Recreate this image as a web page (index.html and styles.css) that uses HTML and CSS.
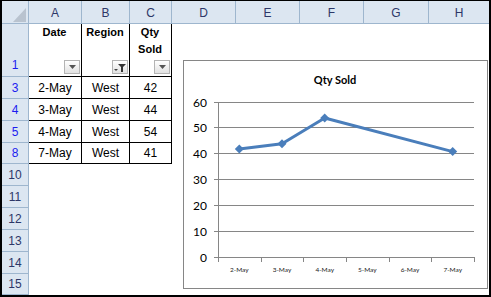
FILE: index.html
```html
<!DOCTYPE html>
<html>
<head>
    <meta charset="UTF-8">
    <title>Qty Sold</title>
    <link rel="stylesheet" href="styles.css">
</head>
<body>
    <div class="sheet">
        <!-- column headers -->
        <div class="corner">
            <svg width="13" height="14" viewBox="0 0 13 14"><polygon points="13,0 13,14 0,14" fill="#b9c3cf"/></svg>
        </div>
        <div class="col-head">A</div>
        <div class="col-head">B</div>
        <div class="col-head">C</div>
        <div class="col-head">D</div>
        <div class="col-head">E</div>
        <div class="col-head">F</div>
        <div class="col-head">G</div>
        <div class="col-head last">H</div>

        <!-- row 1: table headings -->
        <div class="row-head shown tall">1</div>
        <div class="tbl th">
            <span>Date</span>
            <span class="filter-btn">
                <svg width="7" height="4" viewBox="0 0 7 4"><polygon points="0,0 7,0 3.5,4" fill="#555"/></svg>
            </span>
        </div>
        <div class="tbl th">
            <span>Region</span>
            <span class="filter-btn on">
                <svg width="12" height="9" viewBox="0 0 12 9">
                    <polygon points="0,6 4,6 2,8" fill="#444"/>
                    <polygon points="4,1 12,1 9,4 9,9 7,9 7,4" fill="#333"/>
                </svg>
            </span>
        </div>
        <div class="tbl th">
            <span>Qty<br>Sold</span>
            <span class="filter-btn">
                <svg width="7" height="4" viewBox="0 0 7 4"><polygon points="0,0 7,0 3.5,4" fill="#555"/></svg>
            </span>
        </div>
        <div class="blank span5"></div>

        <div class="row-head shown">3</div>
        <div class="tbl">2-May</div>
        <div class="tbl">West</div>
        <div class="tbl">42</div>
        <div class="blank span5"></div>

        <div class="row-head shown">4</div>
        <div class="tbl">3-May</div>
        <div class="tbl">West</div>
        <div class="tbl">44</div>
        <div class="blank span5"></div>

        <div class="row-head shown">5</div>
        <div class="tbl">4-May</div>
        <div class="tbl">West</div>
        <div class="tbl">54</div>
        <div class="blank span5"></div>

        <div class="row-head shown">8</div>
        <div class="tbl">7-May</div>
        <div class="tbl">West</div>
        <div class="tbl">41</div>
        <div class="blank span5"></div>

        <div class="row-head">10</div>
        <div class="blank span8"></div>
        <div class="row-head">11</div>
        <div class="blank span8"></div>
        <div class="row-head">12</div>
        <div class="blank span8"></div>
        <div class="row-head">13</div>
        <div class="blank span8"></div>
        <div class="row-head">14</div>
        <div class="blank span8"></div>
        <div class="row-head">15</div>
        <div class="blank span8"></div>

        <!-- floating chart -->
        <div class="chart">
            <svg width="303" height="227" viewBox="0 0 303 227">
                <text class="chart-title" x="151" y="23" text-anchor="middle">Qty Sold</text>

                <g stroke="#868686" stroke-width="1">
                    <line x1="30" y1="41.5" x2="290" y2="41.5"/>
                    <line x1="30" y1="66.5" x2="290" y2="66.5"/>
                    <line x1="30" y1="92.5" x2="290" y2="92.5"/>
                    <line x1="30" y1="118.5" x2="290" y2="118.5"/>
                    <line x1="30" y1="144.5" x2="290" y2="144.5"/>
                    <line x1="30" y1="170.5" x2="290" y2="170.5"/>
                    <line x1="30" y1="196.5" x2="291" y2="196.5"/>
                    <line x1="34.5" y1="41" x2="34.5" y2="201"/>
                    <line x1="77.5" y1="196" x2="77.5" y2="201"/>
                    <line x1="119.5" y1="196" x2="119.5" y2="201"/>
                    <line x1="162.5" y1="196" x2="162.5" y2="201"/>
                    <line x1="205.5" y1="196" x2="205.5" y2="201"/>
                    <line x1="247.5" y1="196" x2="247.5" y2="201"/>
                    <line x1="290.5" y1="196" x2="290.5" y2="201"/>
                </g>

                <g class="y-labels" text-anchor="end">
                    <text x="23" y="45.5">60</text>
                    <text x="23" y="70.5">50</text>
                    <text x="23" y="96.5">40</text>
                    <text x="23" y="122.5">30</text>
                    <text x="23" y="148.5">20</text>
                    <text x="23" y="174.5">10</text>
                    <text x="23" y="200.5">0</text>
                </g>

                <g class="x-labels" text-anchor="middle">
                    <text x="55.3" y="211">2-May</text>
                    <text x="98" y="211">3-May</text>
                    <text x="140.7" y="211">4-May</text>
                    <text x="183.3" y="211">5-May</text>
                    <text x="226" y="211">6-May</text>
                    <text x="268.7" y="211">7-May</text>
                </g>

                <polyline points="55.3,88 98,82.8 140.7,57 268.7,90.6" fill="none" stroke="#4a7ebb" stroke-width="3" stroke-linejoin="round"/>
                <g fill="#4a7ebb">
                    <polygon points="55.3,83.5 59.8,88 55.3,92.5 50.8,88"/>
                    <polygon points="98,78.3 102.5,82.8 98,87.3 93.5,82.8"/>
                    <polygon points="140.7,52.5 145.2,57 140.7,61.5 136.2,57"/>
                    <polygon points="268.7,86.1 273.2,90.6 268.7,95.1 264.2,90.6"/>
                </g>
            </svg>
        </div>
    </div>
</body>
</html>
```

FILE: styles.css
```css
* {
    margin: 0;
    padding: 0;
    box-sizing: border-box;
}

body {
    background: #ffffff;
    font-family: 'Liberation Sans', Arial, sans-serif;
}

.sheet {
    position: relative;
    width: 491px;
    height: 297px;
    border: 2px solid #000;
    border-top-width: 1px;
    display: grid;
    grid-template-columns: 27px 53px 48px 42px 64px 64px 64px 65px 60px;
    grid-template-rows: 23px 53px 22px 22px 22px 21px 22px 22px 22px 22px 22px 21px;
    background: #ffffff;
}

.corner {
    background-color: #dce6f1;
    border-right: 1px solid #9eb6ce;
    border-bottom: 1px solid #9eb6ce;
    display: flex;
    justify-content: flex-end;
    align-items: flex-end;
    padding: 0 2px 1px 0;
}

.col-head {
    background-color: #dce6f1;
    border-right: 1px solid #9eb6ce;
    border-bottom: 1px solid #9eb6ce;
    display: flex;
    justify-content: center;
    align-items: center;
    padding-top: 2px;
    font-size: 12px;
    color: #2d3768;
}

.col-head.last {
    border-right: none;
}

.row-head {
    background-color: #dce6f1;
    border-right: 1px solid #9eb6ce;
    border-bottom: 1px solid #9eb6ce;
    display: flex;
    justify-content: center;
    align-items: center;
    font-size: 12px;
    color: #2d3768;
}

.row-head.shown {
    color: #1c1cf0;
}

.row-head.tall {
    align-items: flex-end;
    padding-bottom: 4px;
}

.tbl {
    border-right: 1px solid #000;
    border-bottom: 1px solid #000;
    display: flex;
    justify-content: center;
    align-items: center;
    font-size: 12px;
    color: #000;
}

.th {
    flex-direction: column;
    justify-content: space-between;
    font-size: 11px;
    font-weight: bold;
    line-height: 17px;
    text-align: center;
    padding: 0 1px 2px 0;
}

.filter-btn {
    align-self: flex-end;
    width: 16px;
    height: 14px;
    border: 1px solid #b4b4b4;
    background: linear-gradient(#ffffff, #e2e2e2);
    display: flex;
    justify-content: center;
    align-items: center;
}

.filter-btn.on {
    justify-content: flex-start;
    padding-left: 1px;
}

.blank.span5 {
    grid-column: span 5;
}

.blank.span8 {
    grid-column: span 8;
}

/* chart floats over the empty cells */
.chart {
    position: absolute;
    left: 181px;
    top: 59px;
    width: 305px;
    height: 229px;
    border: 1px solid #868686;
    background: #ffffff;
}

.chart svg {
    display: block;
}

.chart-title {
    font-family: Lato, 'Open Sans', sans-serif;
    font-size: 11px;
    font-weight: bold;
    fill: #000;
}

.y-labels text {
    font-family: Lato, 'Open Sans', sans-serif;
    font-size: 12px;
    fill: #000;
}

.x-labels text {
    font-family: Lato, 'Open Sans', sans-serif;
    font-size: 6.5px;
    fill: #222;
}
```
